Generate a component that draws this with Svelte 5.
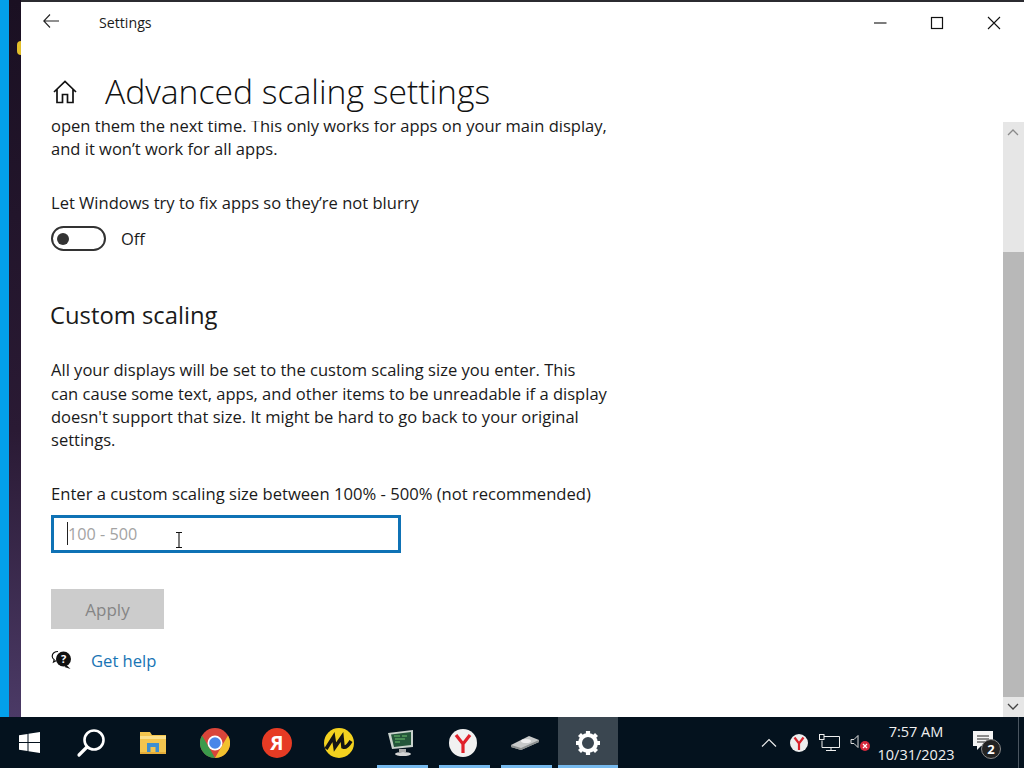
<script>
	// largeur des boutons de la barre des taches = 62px
	const body1 = 'open them the next time. This only works for apps on your main display,';
	// coupures de ligne fixes, comme sur la capture
	const custom = [
		'All your displays will be set to the custom scaling size you enter. This',
		'can cause some text, apps, and other items to be unreadable if a display',
		"doesn't support that size. It might be hard to go back to your original",
		'settings.'
	];
</script>

<div class="screen">
	<div class="top">
		<div class="wallpaper">
			<div class="wall-blue"></div>
			<div class="wall-dark"><span class="wall-dot"></span></div>
		</div>

		<div class="window">
			<div class="titlebar">
				<svg class="back" width="16" height="14" viewBox="0 0 16 14"><path d="M7 .5.8 7l6.200 6.500M.8 7H16" fill="none" stroke="#222" stroke-width="1.1"/></svg>
				<span class="app-title">Settings</span>
				<div class="controls">
					<svg width="14" height="14" viewBox="0 0 14 14"><path d="M1 7h12.5" stroke="#111" stroke-width="1.1"/></svg>
					<svg width="14" height="14" viewBox="0 0 14 14"><rect x="1.5" y="1.5" width="11" height="11" fill="none" stroke="#111" stroke-width="1.2"/></svg>
					<svg width="14" height="14" viewBox="0 0 14 14"><path d="M1 1l12 12M13 1 1 13" stroke="#111" stroke-width="1.1"/></svg>
				</div>
			</div>

			<div class="page-head">
				<svg width="24" height="24" viewBox="0 0 24 24"><path d="M1 12 12 1.500 23 12M4 9.500V22.500h5.500v-8h5v8H20V9.500" fill="none" stroke="#111" stroke-width="1.7"/></svg>
				<h1>Advanced scaling settings</h1>
			</div>

			<div class="main">
				<div class="scroller">
					<p class="clipped">{body1}<br />and it won’t work for all apps.</p>

					<div class="label">Let Windows try to fix apps so they’re not blurry</div>
					<div class="toggle-row">
						<span class="toggle"><span class="knob"></span></span>
						<span>Off</span>
					</div>

					<h2>Custom scaling</h2>
					<p class="desc">
						{#each custom as line}
							<span class="line">{line}</span>
						{/each}
					</p>

					<div class="label enter">Enter a custom scaling size between 100% - 500% (not recommended)</div>
					<div class="field">
						<input type="text" placeholder="100 - 500" />
						<span class="caret"></span>
						<svg class="ibeam" width="8" height="16" viewBox="0 0 8 16"><path d="M1 .5h6M1 15.500h6M4 .5v15" fill="none" stroke="#111" stroke-width="1.1"/></svg>
					</div>

					<button class="apply" disabled>Apply</button>

					<div class="help">
						<svg width="21" height="20" viewBox="0 0 21 20">
							<path d="M7 1.500c-3.300 0-5.800 2-5.800 4.700 0 1.500.8 2.700 2 3.500L2.500 12l3-1.500" fill="#fff" stroke="#111" stroke-width="1.2"/>
							<circle cx="12.500" cy="9" r="7.500" fill="#111"/>
							<path d="M15.500 15l4 4-6-2z" fill="#111"/>
							<text x="12.500" y="13" font-size="11" font-weight="700" fill="#fff" text-anchor="middle" font-family="'Open Sans', sans-serif">?</text>
						</svg>
						<a href="#help">Get help</a>
					</div>
				</div>

				<div class="scrollbar">
					<div class="arrow"><svg width="12" height="8" viewBox="0 0 12 8"><path d="M1 7l5-5 5 5" fill="none" stroke="#8a8a8a" stroke-width="1.300"/></svg></div>
					<div class="track"><div class="thumb"></div></div>
					<div class="arrow"><svg width="12" height="8" viewBox="0 0 12 8"><path d="M1 1l5 5 5-5" fill="none" stroke="#444" stroke-width="1.300"/></svg></div>
				</div>
			</div>
		</div>
	</div>

	<div class="taskbar">
		<div class="tb start">
			<svg width="21" height="21" viewBox="0 0 21 21"><path d="M0 3.200 8.500 2v8H0zM9.500 1.800 21 0v10H9.500zM0 11h8.500v8L0 17.800zM9.500 11H21v10L9.500 19.200z" fill="#fff"/></svg>
		</div>
		<div class="tb">
			<svg width="30" height="30" viewBox="0 0 30 30"><circle cx="18" cy="12" r="9.500" fill="none" stroke="#fff" stroke-width="2.600"/><path d="M11 19 3 27" stroke="#fff" stroke-width="3.200" stroke-linecap="round"/></svg>
		</div>
		<div class="tb">
			<svg width="28" height="24" viewBox="0 0 28 24">
				<path d="M1 1h10l2 3h14v19H1z" fill="#f3c54e"/>
				<rect x="1" y="5" width="26" height="3" fill="#fbe08c"/>
				<path d="M8 21v-9h12v9h-3.500v-5h-5v5z" fill="#3d8fd1"/>
				<rect x="1" y="21" width="26" height="2" fill="#e5ad3a"/>
			</svg>
		</div>
		<div class="tb">
			<svg width="30" height="30" viewBox="0 0 30 30">
				<circle cx="15" cy="15" r="15" fill="#d9453a"/>
				<path d="M28 7.500A15 15 0 0 1 15 30l6.500-11.500z" fill="#f2c12e"/>
				<path d="M15 30A15 15 0 0 1 2 7.500l6.500 11z" fill="#3b9a4b"/>
				<circle cx="15" cy="15" r="7.500" fill="#fff"/>
				<circle cx="15" cy="15" r="5.800" fill="#4a86e8"/>
			</svg>
		</div>
		<div class="tb">
			<span class="ya">Я</span>
		</div>
		<div class="tb">
			<svg width="30" height="30" viewBox="0 0 30 30">
				<circle cx="15" cy="15" r="15" fill="#f4d21f"/>
				<path d="M2 21 9.500 9l1.500 10 7-10 1 10c2 1 5-1 8-6" fill="none" stroke="#141414" stroke-width="3.600"/>
			</svg>
		</div>
		<div class="tb running">
			<svg width="30" height="30" viewBox="0 0 30 30">
				<path d="M2 5 27 2v17L6 21z" fill="#c9d2cc"/>
				<path d="M5 6.500 25 4v13L8 19z" fill="#24563a"/>
				<path d="M8 8h6M9 11h10M9 14h5M16 8h5" stroke="#6fc36f" stroke-width="1.200"/>
				<path d="M13 21h7v3h-7z" fill="#aaa"/>
				<ellipse cx="17" cy="26" rx="8" ry="2" fill="#d5d5d5"/>
			</svg>
		</div>
		<div class="tb running">
			<svg width="28" height="28" viewBox="0 0 28 28">
				<circle cx="14" cy="14" r="14" fill="#f1f1f1"/>
				<path d="M7 6l7 9 7-9M14 15v9" fill="none" stroke="#e0202a" stroke-width="3.200"/>
			</svg>
		</div>
		<div class="tb running">
			<svg width="30" height="16" viewBox="0 0 30 16">
				<path d="M1 10 19 1l10 4v2L11 15 1 12z" fill="#c7c9c9"/>
				<path d="M1 10l10 3L29 5v2L11 15 1 12z" fill="#8b8f8f"/>
				<ellipse cx="16" cy="6" rx="5" ry="2" fill="#eee"/>
			</svg>
		</div>
		<div class="tb active">
			<svg width="26" height="26" viewBox="0 0 26 26">
				<circle cx="13" cy="13" r="8" fill="none" stroke="#fff" stroke-width="4"/>
				<path d="M13 1v5M13 20v5M1 13h5M20 13h5M4.500 4.500 8 8M18 18l3.500 3.500M21.500 4.500 18 8M8 18l-3.500 3.500" stroke="#fff" stroke-width="4.200"/>
			</svg>
		</div>

		<div class="tray">
			<svg width="16" height="9" viewBox="0 0 16 9"><path d="M1 8.500 8 1.500l7 7" fill="none" stroke="#eee" stroke-width="1.200"/></svg>
			<svg class="tray-y" width="18" height="18" viewBox="0 0 18 18">
				<circle cx="9" cy="9" r="9" fill="#eee"/>
				<path d="M4.500 3.500 9 9.500l4.500-6M9 9.500V16" fill="none" stroke="#d8232c" stroke-width="2.200"/>
			</svg>
			<svg class="tray-net" width="21" height="17" viewBox="0 0 21 17">
				<path d="M5 2.500h15.500v11H3v-7M12 13.500v3M7 16.500h10" fill="none" stroke="#eee" stroke-width="1"/>
				<rect x=".5" y=".5" width="4.500" height="5" fill="#0a1620" stroke="#eee"/>
			</svg>
			<svg class="tray-vol" width="22" height="18" viewBox="0 0 22 18">
				<path d="M1 5.500h3L8 1.500v12L4 9.500H1z" fill="none" stroke="#ddd" stroke-width="1"/>
				<circle cx="15" cy="12" r="5" fill="#d6283c"/>
				<path d="M13 10l4 4M17 10l-4 4" stroke="#fff" stroke-width="1.200"/>
			</svg>
			<div class="clock"><span>7:57 AM</span><span>10/31/2023</span></div>
			<div class="notif">
				<svg width="22" height="20" viewBox="0 0 22 20"><path d="M1 1h20v15H9l-4 4v-4H1z" fill="#f4f4f4"/><path d="M5 6h12M5 9h12M5 12h8" stroke="#222" stroke-width="1"/></svg>
				<span class="badge">2</span>
			</div>
			<span class="tray-end"></span>
		</div>
	</div>
</div>

<style>
	:global(body) {
		margin: 0;
		font-family: 'Open Sans', 'Noto Sans', sans-serif;
		background: #000;
	}

	.screen {
		width: 1024px;
		height: 768px;
		display: flex;
		flex-direction: column;
		overflow: hidden;
	}

	.top {
		flex: 1;
		display: flex;
		min-height: 0;
	}

	.wallpaper {
		width: 21px;
		display: flex;
	}

	.wall-blue {
		width: 9px;
		background: #03a0ea;
	}

	.wall-dark {
		position: relative;
		flex: 1;
		background: linear-gradient(#1a1022, #2a1a34 60%, #4b3a66);
	}

	.wall-dot {
		position: absolute;
		right: 0;
		top: 41px;
		width: 4px;
		height: 14px;
		background: #e3bf2a;
		border-radius: 4px 0 0 4px;
	}

	.window {
		flex: 1;
		min-width: 0;
		display: flex;
		flex-direction: column;
		background: #fff;
		border-top: 2px solid #2b2b30;
		color: #1a1a1a;
	}

	.titlebar {
		height: 42px;
		display: flex;
		align-items: center;
		padding-left: 22px;
		flex: none;
	}

	.back {
		margin-right: 40px;
		margin-top: -4px;
	}

	.app-title {
		font-size: 14.2px;
		margin-top: -1px;
	}

	.controls {
		margin-left: auto;
		display: flex;
		gap: 43px;
		padding-right: 23px;
		margin-top: -1px;
	}

	.page-head {
		height: 77px;
		flex: none;
		display: flex;
		align-items: center;
		padding-left: 32px;
		gap: 28px;
		padding-top: 19px;
		box-sizing: border-box;
		overflow: hidden;
	}

	h1 {
		margin: 0;
		font-size: 33.7px;
		font-weight: 300;
		color: #111;
		line-height: 1;
	}

	.main {
		flex: 1;
		min-height: 0;
		display: flex;
	}

	.scroller {
		flex: 1;
		min-width: 0;
		overflow: hidden;
		padding-left: 30px;
		font-size: 16.55px;
		line-height: 23.4px;
	}

	p {
		margin: 0;
		width: 560px;
	}

	.clipped {
		margin-top: -7px;
		white-space: nowrap;
	}

	.label {
		margin-top: 30px;
		white-space: nowrap;
	}

	.toggle-row {
		margin-top: 12px;
		display: flex;
		align-items: center;
		gap: 15px;
	}

	.toggle {
		width: 55px;
		height: 25px;
		box-sizing: border-box;
		border: 2.5px solid #333;
		border-radius: 13px;
		display: flex;
		align-items: center;
		padding-left: 4px;
	}

	.knob {
		width: 12px;
		height: 12px;
		border-radius: 50%;
		background: #333;
	}

	h2 {
		margin: 49px 0 0 -1px;
		font-size: 23.8px;
		font-weight: 400;
		line-height: 30px;
	}

	.desc {
		margin-top: 28px;
		white-space: nowrap;
	}

	.line {
		display: block;
	}

	.enter {
		margin-top: 30px;
		font-size: 16.62px;
	}

	.field {
		position: relative;
		margin-top: 10px;
		width: 350px;
		height: 38px;
	}

	input {
		width: 100%;
		height: 100%;
		box-sizing: border-box;
		border: 3px solid #0f72b5;
		outline: none;
		padding: 0 0 0 14px;
		font: inherit;
		font-size: 16.2px;
	}

	input::placeholder {
		color: #a3a3a3;
		opacity: 1;
	}

	.caret {
		position: absolute;
		left: 16px;
		top: 7px;
		width: 1px;
		height: 23px;
		background: #222;
	}

	.ibeam {
		position: absolute;
		left: 124px;
		top: 17px;
	}

	.apply {
		display: block;
		margin-top: 36px;
		width: 113px;
		height: 40px;
		border: none;
		background: #cccccc;
		color: #858585;
		font: inherit;
		font-size: 17px;
		padding: 0;
	}

	.help {
		margin-top: 19px;
		display: flex;
		align-items: center;
		gap: 19px;
		height: 24px;
	}

	.help a {
		color: #1874b4;
		text-decoration: none;
		font-size: 16.6px;
	}

	.scrollbar {
		width: 21px;
		flex: none;
		margin-top: 1px;
		display: flex;
		flex-direction: column;
		background: #e6e6e6;
	}

	.arrow {
		height: 20px;
		flex: none;
		display: flex;
		align-items: center;
		justify-content: center;
		padding-right: 2px;
	}

	.track {
		flex: 1;
		padding-top: 110px;
		display: flex;
	}

	.thumb {
		flex: 1;
		background: #b8b8b8;
	}

	.taskbar {
		height: 51px;
		flex: none;
		display: flex;
		background: #04121e;
		color: #f0f0f0;
	}

	.tb {
		width: 62px;
		height: 51px;
		flex: none;
		box-sizing: border-box;
		display: flex;
		align-items: center;
		justify-content: center;
		position: relative;
	}

	.start {
		width: 60px;
		padding-right: 2px;
	}

	.running::after,
	.active::after {
		content: '';
		position: absolute;
		left: 7px;
		right: 4px;
		bottom: 0;
		height: 3px;
		background: #76b9ed;
	}

	.active {
		background: #3a4650;
		margin-left: 2px;
		width: 60px;
	}

	.active::after {
		left: 0;
		right: 0;
	}

	.ya {
		width: 30px;
		height: 30px;
		border-radius: 50%;
		background: #e63b24;
		color: #fff;
		font-size: 20px;
		font-weight: 700;
		line-height: 30px;
		text-align: center;
	}

	.tray {
		margin-left: auto;
		display: flex;
		align-items: center;
		height: 51px;
		padding-right: 5px;
	}

	.tray-y {
		margin-left: 13px;
	}

	.tray-net {
		margin-left: 11px;
	}

	.tray-vol {
		margin-left: 10px;
	}

	.clock {
		margin-left: 5px;
		width: 78px;
		display: flex;
		flex-direction: column;
		align-items: center;
		font-size: 14.5px;
		line-height: 23px;
	}

	.notif {
		position: relative;
		margin-left: 17px;
		margin-right: 24px;
		width: 22px;
		height: 20px;
		margin-top: -6px;
	}

	.badge {
		position: absolute;
		left: 9px;
		top: 9px;
		width: 18px;
		height: 18px;
		border-radius: 50%;
		background: #222;
		border: 1px solid #888;
		font-size: 13px;
		font-weight: 700;
		line-height: 18px;
		text-align: center;
		color: #fff;
	}

	.tray-end {
		width: 1px;
		height: 51px;
		background: #4a5560;
	}
</style>
